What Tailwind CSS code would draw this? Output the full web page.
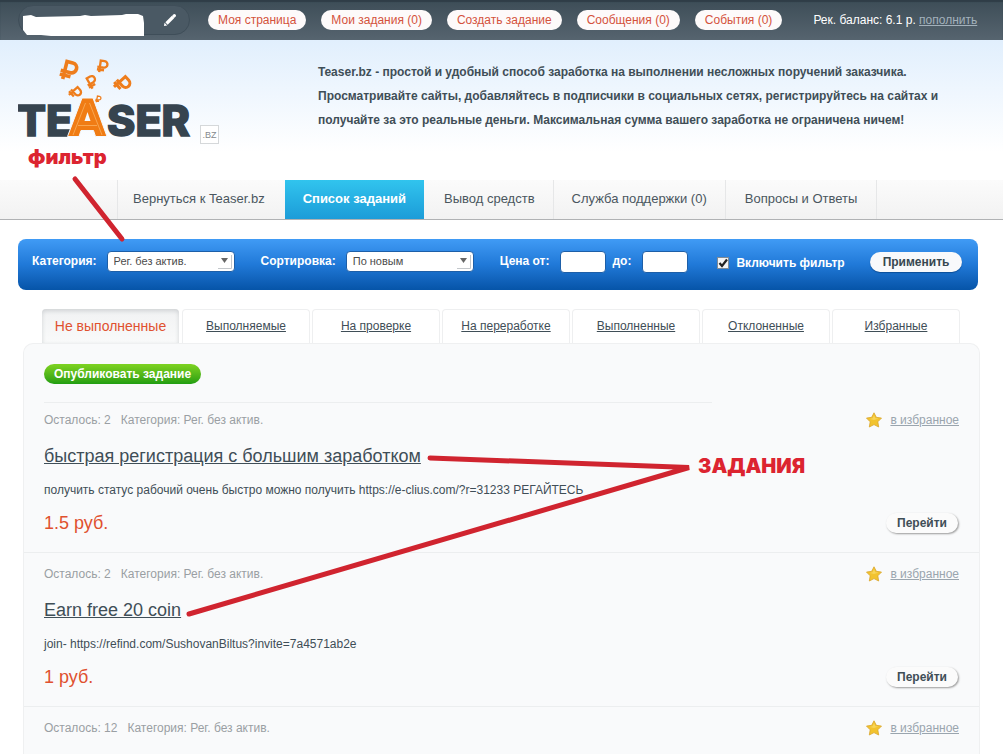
<!doctype html>
<html lang="ru">
    <head>
        <meta charset="UTF-8" />
        <meta name="viewport" content="width=device-width, initial-scale=1.0" />
        <title>Список заданий | Teaser.bz</title>
        <script src="https://cdn.jsdelivr.net/npm/@tailwindcss/browser@4"></script>
    </head>
    <body class="relative flex min-h-screen flex-col overflow-x-hidden bg-white font-['Liberation_Sans',Arial,sans-serif] text-xs text-[#3f4e57]">
        <!-- Верхняя панель -->
        <div class="flex h-10 items-center bg-linear-to-b from-[#3d4d57] to-[#56646f] pl-[18px] shadow-[inset_0_2px_1px_#2f3d47]">
            <div class="flex h-[30px] w-[172px] items-center rounded-full border border-[#3f4e59] bg-[#4a5964]">
                <svg class="h-8 w-[126px]" viewBox="0 0 126 32" aria-hidden="true">
                    <path fill="#fff" d="M4 12 12 11l5 2 44-1 5-1 6 1 31-1 4-1h12l5 2 1 7v13H104l-51 1-2-1H32l-10-1H8l-4-5z" />
                </svg>
                <button type="button" aria-label="Редактировать" class="ml-[18px]">
                    <svg class="size-[14px]" viewBox="0 0 14 14" aria-hidden="true">
                        <path d="M3.500 10.500 10 4" stroke="#fff" stroke-width="3.200" />
                        <path d="M10.800 3.200 11.400 2.600" stroke="#fff" stroke-width="3.200" stroke-linecap="round" />
                        <path d="m1.500 9.800 2.700 2.700L1 13z" fill="#fff" />
                    </svg>
                </button>
            </div>
            <nav class="ml-[18px] flex gap-[15px] text-[#d4523c]">
                <a href="#" class="rounded-full bg-[#fdfafa] px-[10px] leading-5">Моя страница</a>
                <a href="#" class="rounded-full bg-[#fdfafa] px-[10px] leading-5">Мои задания (0)</a>
                <a href="#" class="rounded-full bg-[#fdfafa] px-[10px] leading-5">Создать задание</a>
                <a href="#" class="rounded-full bg-[#fdfafa] px-[10px] leading-5">Сообщения (0)</a>
                <a href="#" class="rounded-full bg-[#fdfafa] px-[10px] leading-5">События (0)</a>
            </nav>
            <p class="ml-[31px] text-white">Рек. баланс: 6.1 р. <a href="#" class="text-[#a3b1bb] underline">пополнить</a></p>
        </div>

        <!-- Шапка -->
        <header class="flex h-[140px] bg-linear-to-b from-[#e1effd] to-white to-80% pl-[18px]">
            <a href="#" class="flex items-end pb-[25px]" aria-label="Teaser.bz">
                <svg class="h-24 w-[176px]" viewBox="0 0 176 96" aria-hidden="true">
                    <g fill="none" stroke="#ee7d1c" stroke-width="3.600">
                        <path transform="translate(50 11) rotate(14)" d="M-3 10V-8H3a5 5 0 0 1 0 10H-7M-7 6H4" />
                        <path transform="translate(84 7) rotate(8) scale(.65)" d="M-3 10V-8H3a5 5 0 0 1 0 10H-7M-7 6H4" />
                        <path transform="translate(73 23) rotate(-30) scale(.65)" d="M-3 10V-8H3a5 5 0 0 1 0 10H-7M-7 6H4" />
                        <path transform="translate(104 24) rotate(48) scale(.85)" d="M-3 10V-8H3a5 5 0 0 1 0 10H-7M-7 6H4" />
                        <path transform="translate(57 33) rotate(48) scale(.65)" d="M-3 10V-8H3a5 5 0 0 1 0 10H-7M-7 6H4" />
                        <path transform="translate(80 40) rotate(10) scale(.35)" d="M-3 10V-8H3a5 5 0 0 1 0 10H-7M-7 6H4" />
                    </g>
                    <g font-family="Inter, sans-serif" font-weight="800" font-size="43" fill="#36444f" stroke="#36444f" stroke-width="1.500">
                        <text x="-1" y="77">TE</text>
                        <text x="89" y="77">SER</text>
                    </g>
                    <path fill="#f07c14" stroke="#f4f9fe" stroke-width="1" d="M64 39H75L89 77.500H77.500L75.500 71.500H63L61 77.500H49.500z" />
                    <path fill="#f4f9fe" d="m69.500 53 3 9h-6z" />
                    <path fill="none" stroke="#f8a650" stroke-width="1" d="M55 76 67.500 44M84 76 71.500 44M60 66.500h19" />
                </svg>
                <span class="mb-[11px] ml-[6px] flex size-[19px] items-center justify-center border border-[#d5d8da] bg-white text-[9px] text-[#84898d]">.BZ</span>
            </a>
            <p class="ml-[99px] mt-5 max-w-[640px] font-bold leading-6">
                Teaser.bz - простой и удобный способ заработка на выполнении несложных поручений заказчика. Просматривайте сайты, добавляйтесь в подписчики в социальных сетях, регистрируйтесь на сайтах и получайте за это реальные деньги. Максимальная сумма вашего заработка не ограничена ничем!
            </p>
        </header>

        <!-- Главное меню -->
        <nav class="flex h-10 border-b border-[#b0b2b4] bg-linear-to-b from-[#fbfbfb] to-[#f2f2f2] pl-[117px] text-[13px] leading-[38px] text-[#4a565e]">
            <a href="#" class="border-l border-[#e6e7e8] pl-[15px] pr-5">Вернуться к Teaser.bz</a>
            <a href="#" class="bg-linear-to-b from-[#31c4ee] to-[#1c9cd8] px-[18px] font-bold text-white">Список заданий</a>
            <a href="#" class="border-r border-[#e6e7e8] pl-5 pr-[18px]">Вывод средств</a>
            <a href="#" class="border-r border-[#e6e7e8] px-[18px]">Служба поддержки (0)</a>
            <a href="#" class="border-r border-[#e6e7e8] px-[19px]">Вопросы и Ответы</a>
        </nav>

        <main class="flex flex-1 flex-col pl-[18px] pr-[23px] pt-[19px]">
            <!-- Фильтр заданий -->
            <form class="mr-[2px] flex h-[51px] items-start rounded-lg bg-linear-to-b from-[#409bf5] via-[#2079d8] to-[#0654a8] pl-[14px] pt-3 font-bold text-white">
                <label for="category" class="leading-5">Категория:</label>
                <div class="relative ml-[10px]">
                    <select id="category" class="block h-[21px] w-32 appearance-none rounded-sm border border-[#1d5fa8] bg-white pl-[6px] text-[11px] font-normal text-[#4b4b4b]">
                        <option>Рег. без актив.</option>
                    </select>
                    <svg class="pointer-events-none absolute right-[3px] top-[3px] size-[15px]" viewBox="0 0 15 15" aria-hidden="true">
                        <path d="M1 14.500h13.500V1" fill="none" stroke="#c3c7cb" />
                        <path d="M4 4h7l-3.500 5z" fill="#666" />
                    </svg>
                </div>
                <label for="sort" class="ml-[26px] leading-5">Сортировка:</label>
                <div class="relative ml-[10px]">
                    <select id="sort" class="block h-[21px] w-32 appearance-none rounded-sm border border-[#1d5fa8] bg-white pl-[6px] text-[11px] font-normal text-[#4b4b4b]">
                        <option>По новым</option>
                    </select>
                    <svg class="pointer-events-none absolute right-[3px] top-[3px] size-[15px]" viewBox="0 0 15 15" aria-hidden="true">
                        <path d="M1 14.500h13.500V1" fill="none" stroke="#c3c7cb" />
                        <path d="M4 4h7l-3.500 5z" fill="#666" />
                    </svg>
                </div>
                <label for="priceFrom" class="ml-[26px] leading-5">Цена от:</label>
                <input type="text" id="priceFrom" class="ml-[11px] h-[22px] w-[46px] rounded border border-[#1d5fa8] bg-white px-1 text-[#4b4b4b]" />
                <label for="priceTo" class="ml-[6px] leading-5">до:</label>
                <input type="text" id="priceTo" class="ml-[11px] h-[22px] w-[46px] rounded border border-[#1d5fa8] bg-white px-1 text-[#4b4b4b]" />
                <div class="ml-[29px] flex h-6 items-center">
                    <span class="relative block size-3">
                        <input type="checkbox" id="useFilter" checked class="peer block size-3 appearance-none border border-[#7f8b96] bg-[#f3f3f3]" />
                        <svg class="pointer-events-none absolute left-0 top-0 hidden size-3 peer-checked:block" viewBox="0 0 12 12" aria-hidden="true">
                            <path d="m2.500 6 2.500 3 5-6.500" fill="none" stroke="#222" stroke-width="2.200" />
                        </svg>
                    </span>
                    <label for="useFilter" class="ml-[7px]">Включить фильтр</label>
                </div>
                <button type="submit" class="ml-[25px] mt-px h-5 rounded-full bg-[#f8f9fb] px-[13px] font-bold text-[#37474f] shadow-[0_1px_1px_#0c4f99]">Применить</button>
            </form>

            <!-- Вкладки -->
            <nav class="ml-6 mt-[19px] flex gap-[2px] text-center">
                <a href="#" class="mr-px w-[137px] rounded-t bg-linear-to-b from-[#f1f2f3] to-[#f9fafa] text-sm leading-[34px] text-[#e0512f] shadow-[inset_0_2px_4px_#cfd2d4]">Не выполненные</a>
                <a href="#" class="w-32 rounded-t border border-b-0 border-[#eeeff0] leading-[33px] underline">Выполняемые</a>
                <a href="#" class="w-32 rounded-t border border-b-0 border-[#eeeff0] leading-[33px] underline">На проверке</a>
                <a href="#" class="w-32 rounded-t border border-b-0 border-[#eeeff0] leading-[33px] underline">На переработке</a>
                <a href="#" class="w-32 rounded-t border border-b-0 border-[#eeeff0] leading-[33px] underline">Выполненные</a>
                <a href="#" class="w-32 rounded-t border border-b-0 border-[#eeeff0] leading-[33px] underline">Отклоненные</a>
                <a href="#" class="w-32 rounded-t border border-b-0 border-[#eeeff0] leading-[33px] underline">Избранные</a>
            </nav>

            <!-- Список заданий -->
            <section class="ml-[5px] flex-1 rounded-t-[10px] border border-b-0 border-[#eff0f1] bg-[#f9fafb]">
                <div class="px-5 pt-5">
                    <button type="button" class="block h-5 rounded-full bg-linear-to-b from-[#7ed321] to-[#1f9e12] px-[10px] font-bold text-white">Опубликовать задание</button>
                    <hr class="mt-[18px] w-[73%] border-[#eceeef]" />
                </div>

                <article class="border-b border-[#eceeef] px-5 pb-[17px] pt-2">
                    <div class="flex items-center leading-[18px] text-[#9a9fa3]">
                        <span>Осталось: 2</span>
                        <span class="ml-[10px]">Категория: Рег. без актив.</span>
                        <svg class="ml-auto size-4" viewBox="0 0 16 16" aria-hidden="true">
                            <path d="m8 .8 2.300 4.500 5.200.8-3.700 3.700.9 5.200L8 12.600 3.300 15l.9-5.200L.5 6.100l5.200-.8z" fill="#f2c32e" stroke="#d9a62c" stroke-width=".8" stroke-linejoin="round" />
                            <path d="m8 3 1.300 3.200 3.200.4L8 8 4 7l2.700-.8z" fill="#f7d55a" />
                        </svg>
                        <a href="#" class="ml-2 text-[#9aa5ae] underline">в избранное</a>
                    </div>
                    <h2 class="mt-[15px] text-lg leading-6"><a href="#" class="underline">быстрая регистрация с большим заработком</a></h2>
                    <p class="mt-[13px] leading-[18px]">получить статус рабочий очень быстро можно получить https://e-clius.com/?r=31233 РЕГАЙТЕСЬ</p>
                    <div class="mt-3 flex items-center justify-between">
                        <span class="text-lg leading-6 text-[#e0512f]">1.5 руб.</span>
                        <button type="button" class="mr-px h-5 rounded-full bg-[#fbfbfb] px-[11px] font-bold shadow-[1px_1px_2px_#9a9a9a]">Перейти</button>
                    </div>
                </article>

                <article class="border-b border-[#eceeef] px-5 pb-[17px] pt-3">
                    <div class="flex items-center leading-[18px] text-[#9a9fa3]">
                        <span>Осталось: 2</span>
                        <span class="ml-[10px]">Категория: Рег. без актив.</span>
                        <svg class="ml-auto size-4" viewBox="0 0 16 16" aria-hidden="true">
                            <path d="m8 .8 2.300 4.500 5.200.8-3.700 3.700.9 5.200L8 12.600 3.300 15l.9-5.200L.5 6.100l5.200-.8z" fill="#f2c32e" stroke="#d9a62c" stroke-width=".8" stroke-linejoin="round" />
                            <path d="m8 3 1.300 3.200 3.200.4L8 8 4 7l2.700-.8z" fill="#f7d55a" />
                        </svg>
                        <a href="#" class="ml-2 text-[#9aa5ae] underline">в избранное</a>
                    </div>
                    <h2 class="mt-[15px] text-lg leading-6"><a href="#" class="underline">Earn free 20 coin</a></h2>
                    <p class="mt-[13px] leading-[18px]">join- https://refind.com/SushovanBiltus?invite=7a4571ab2e</p>
                    <div class="mt-3 flex items-center justify-between">
                        <span class="text-lg leading-6 text-[#e0512f]">1 руб.</span>
                        <button type="button" class="mr-px h-5 rounded-full bg-[#fbfbfb] px-[11px] font-bold shadow-[1px_1px_2px_#9a9a9a]">Перейти</button>
                    </div>
                </article>

                <article class="px-5 pt-3">
                    <div class="flex items-center leading-[18px] text-[#9a9fa3]">
                        <span>Осталось: 12</span>
                        <span class="ml-[10px]">Категория: Рег. без актив.</span>
                        <svg class="ml-auto size-4" viewBox="0 0 16 16" aria-hidden="true">
                            <path d="m8 .8 2.300 4.500 5.200.8-3.700 3.700.9 5.200L8 12.600 3.300 15l.9-5.200L.5 6.100l5.200-.8z" fill="#f2c32e" stroke="#d9a62c" stroke-width=".8" stroke-linejoin="round" />
                            <path d="m8 3 1.300 3.200 3.200.4L8 8 4 7l2.700-.8z" fill="#f7d55a" />
                        </svg>
                        <a href="#" class="ml-2 text-[#9aa5ae] underline">в избранное</a>
                    </div>
                </article>
            </section>
        </main>

        <!-- Пометки поверх страницы -->
        <svg class="pointer-events-none absolute left-0 top-0 h-[754px] w-[1003px]" viewBox="0 0 1003 754" aria-hidden="true">
            <g fill="none" stroke="#d0242f" stroke-width="5" stroke-linecap="round">
                <path d="M75 179 122 239" />
                <path d="M430 458 689 467.500 189 614" />
            </g>
        </svg>
        <span class="pointer-events-none absolute left-[28px] top-[145px] font-['Inter',sans-serif] text-xl font-black leading-6 text-[#dc2430]">фильтр</span>
        <span class="pointer-events-none absolute left-[698px] top-[454px] font-['Inter',sans-serif] text-xl font-black leading-6 text-[#dc2430]">ЗАДАНИЯ</span>
    </body>
</html>
